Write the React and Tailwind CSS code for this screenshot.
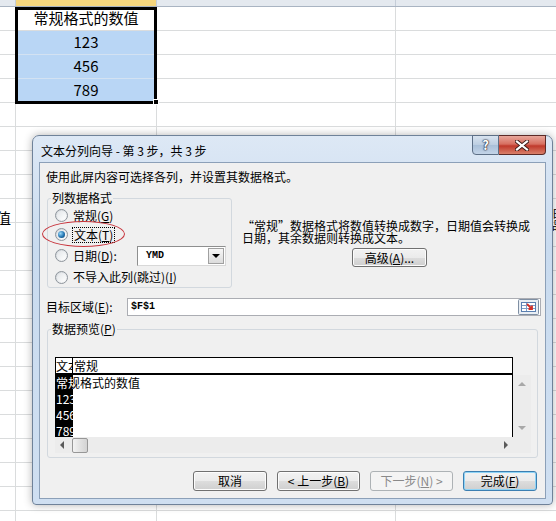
import React from 'react';

const rows = Array.from({ length: 22 }, (_, i) => i);

function Sheet() {
  return (
    <div className="flex flex-col">
      <div className="flex h-[7px] border-b border-[#a9b4c2]">
        <div className="w-[16px] border-r border-[#c5cdd8] bg-[#e4e9ef]" />
        <div className="w-[141px] border-r border-[#c5cdd8] bg-[#f4d57d]" />
        <div className="w-[239px] border-r border-[#c5cdd8] bg-[#e4e9ef]" />
        <div className="flex-1 bg-[#e4e9ef]" />
      </div>
      {rows.map((i) => (
        <div key={i} className="flex h-[24px] shrink-0">
          <div className="relative w-[16px] border-r border-b border-[#dadcdd]">
            {i === 8 && (
              <span className="absolute top-[11px] right-[4px] text-[15px] leading-[15px]">值</span>
            )}
          </div>
          <div
            className={
              i >= 1 && i <= 3
                ? 'flex w-[141px] items-center justify-center border-r border-b border-[#d3e2f2] bg-[#b9d6f5] text-[15px]'
                : 'flex w-[141px] items-center justify-center border-r border-b border-[#dadcdd] text-[15px]'
            }
          >
            {i === 0 && '常规格式的数值'}
            {i === 1 && '123'}
            {i === 2 && '456'}
            {i === 3 && '789'}
          </div>
          <div className="w-[239px] border-r border-b border-[#dadcdd]" />
          <div className="relative flex-1 border-b border-[#dadcdd]">
            {i === 8 && (
              <span className="absolute top-[8px] left-[156px] text-[11px] leading-[12px] whitespace-nowrap">
                日期
                <br />
                品名
              </span>
            )}
          </div>
        </div>
      ))}
    </div>
  );
}

function Radio({ checked }) {
  return (
    <span className="flex h-[13px] w-[13px] shrink-0 items-center justify-center rounded-full border border-[#8e959c] bg-[linear-gradient(135deg,#cfd4d9,#fbfbfb)]">
      <span className="flex h-[9px] w-[9px] items-center justify-center rounded-full bg-[linear-gradient(135deg,#e2e5e8,#ffffff)]">
        {checked && (
          <span className="h-[7px] w-[7px] rounded-full bg-[radial-gradient(circle_at_35%_35%,#9ad8f7,#2476b3_55%,#0c3557)]" />
        )}
      </span>
    </span>
  );
}

function U({ children }) {
  return <span className="underline underline-offset-[1px]">{children}</span>;
}

function CollapseIcon() {
  return (
    <svg width="21" height="16" viewBox="0 0 21 16">
      <rect x="0.5" y="0.5" width="20" height="15" rx="1" fill="#e9eef4" stroke="#7f8fa3" />
      <rect x="3.5" y="3.5" width="14" height="9" fill="#ffffff" stroke="#5a7fb0" />
      <line x1="4" y1="6.5" x2="17" y2="6.5" stroke="#7c9cc6" />
      <line x1="4" y1="9.5" x2="17" y2="9.5" stroke="#7c9cc6" />
      <line x1="8.5" y1="4" x2="8.5" y2="12" stroke="#7c9cc6" />
      <path d="M9 5 L14 10 M14 6.5 L14 10 L10.5 10" stroke="#d0302a" strokeWidth="1.8" fill="none" />
    </svg>
  );
}

function Dialog() {
  return (
    <div className="absolute top-[135px] left-[32px] flex h-[370px] w-[521px] flex-col rounded-t-[7px] rounded-b-[4px] border border-[#6f8299] bg-[linear-gradient(180deg,#dde8f5,#c9dbef_30%,#cfdff1)] shadow-[0_0_8px_rgba(0,0,0,0.3)]">
      <div className="relative flex h-[26px] items-center pt-[3px] pl-[8px] text-[12px] leading-[14px] text-black">
        文本分列向导 - 第 3 步，共 3 步
        <div className="absolute top-[-1px] right-[6px] flex">
          <div className="flex h-[20px] w-[27px] items-center justify-center rounded-bl-[4px] border border-[#5d6f86] bg-[linear-gradient(180deg,#d8e3ef,#bccde1_50%,#a9bfd8_51%,#c3d4e8)] text-[13px] font-bold text-white [text-shadow:0_0_1px_#223,0_0_1px_#223,0_0_2px_#223]">
            ?
          </div>
          <div className="flex h-[20px] w-[47px] items-center justify-center rounded-br-[4px] border border-l-0 border-[#5c2a26] bg-[linear-gradient(180deg,#e8a79b,#d76f60_45%,#c0392b_55%,#d9806a)]">
            <svg width="14" height="11" viewBox="0 0 14 11">
              <path d="M2 1.5 L12 9.5 M12 1.5 L2 9.5" stroke="#3b1a16" strokeWidth="4" strokeLinecap="square" />
              <path d="M2 1.5 L12 9.5 M12 1.5 L2 9.5" stroke="#ffffff" strokeWidth="2.2" strokeLinecap="square" />
            </svg>
          </div>
        </div>
      </div>
      <div className="ml-[6px] flex h-[337px] w-[507px] flex-col border border-[#8ca0b8] bg-[#f0f0f0] text-[12px] leading-[14px] text-black">
        <div className="mt-[7px] h-[14px] pl-[6px]">使用此屏内容可选择各列，并设置其数据格式。</div>

        <div className="mt-[7px] flex h-[97px]">
          <fieldset className="relative ml-[7px] h-[97px] w-[185px] rounded-[3px] border border-[#d2d8de]">
            <legend className="ml-[3px] px-[1px]">列数据格式</legend>
            <div className="flex flex-col pt-[1px] pl-[7px]">
              <div className="flex h-[19px] items-center gap-[5px]">
                <Radio />
                <span>常规(<U>G</U>)</span>
              </div>
              <div className="flex h-[19px] items-center gap-[4px]">
                <Radio checked />
                <span className="border border-dotted border-black px-[1px] leading-[14px]">
                  文本(<U>T</U>)
                </span>
              </div>
              <div className="flex h-[23px] items-center gap-[5px]">
                <Radio />
                <span className="w-[59px]">日期(<U>D</U>):</span>
                <div className="flex h-[20px] w-[89px] items-center border border-[#8e8f8f] border-r-[#d8d8d8] border-b-[#d8d8d8] bg-white">
                  <span className="flex-1 pl-[8px] font-['Liberation_Mono',monospace] text-[10px] font-bold">YMD</span>
                  <span className="mr-[1px] flex h-[16px] w-[16px] items-center justify-center border border-[#a0a0a0] bg-[linear-gradient(180deg,#f7f7f7,#dcdcdc)]">
                    <span className="h-0 w-0 border-x-[4px] border-t-[4px] border-x-transparent border-t-black" />
                  </span>
                </div>
              </div>
              <div className="flex h-[20px] items-center gap-[5px]">
                <Radio />
                <span>不导入此列(跳过)(<U>I</U>)</span>
              </div>
            </div>
            <div className="absolute top-[16px] left-[-6px] h-[26px] w-[83px] rounded-[50%] border border-[#c7353d]" />
          </fieldset>
          <div className="mt-[29px] ml-[10px] flex flex-col">
            <div className="leading-[12px] whitespace-nowrap">
              “常规”数据格式将数值转换成数字，日期值会转换成
              <br />
              日期，其余数据则转换成文本。
            </div>
            <button className="mt-[4px] ml-[110px] flex h-[19px] w-[75px] items-center justify-center rounded-[3px] border border-[#707070] bg-[linear-gradient(180deg,#f2f2f2,#ebebeb_50%,#dddddd_51%,#cfcfcf)] shadow-[inset_0_0_0_1px_#fcfcfc]">
              高级(<U>A</U>)...
            </button>
          </div>
        </div>

        <div className="mt-[10px] flex h-[18px] items-center pl-[6px]">
          <span className="w-[81px]">目标区域(<U>E</U>):</span>
          <div className="flex h-[18px] w-[414px] items-center border border-[#abadb3] bg-white">
            <span className="flex-1 pl-[3px] font-['Liberation_Mono',monospace] text-[10px] font-bold">$F$1</span>
            <span className="mr-[1px] flex">
              <CollapseIcon />
            </span>
          </div>
        </div>

        <fieldset className="mt-[6px] ml-[7px] h-[136px] w-[491px] rounded-[3px] border border-[#d2d8de]">
          <legend className="ml-[3px] px-[1px]">数据预览(<U>P</U>)</legend>
          <div className="mt-[21px] ml-[7px] flex h-[96px] w-[476px]">
            <div className="flex w-[458px] flex-col">
              <div className="flex h-[18px] border border-b-2 border-black bg-white leading-[15px] whitespace-nowrap">
                <div className="w-[17px] overflow-hidden border-r border-black">文本</div>
                <div className="pl-[1px]">常规</div>
              </div>
              <div className="relative h-[62px] overflow-hidden border-x border-black bg-white leading-[16px] whitespace-nowrap">
                <div>常规格式的数值</div>
                <div className="absolute top-0 left-0 h-full w-[17px] overflow-hidden bg-black text-white">
                  <div>常规格式的数值</div>
                  <div>123</div>
                  <div>456</div>
                  <div>789</div>
                </div>
              </div>
              <div className="flex h-[16px] items-center bg-[#ececec]">
                <span className="ml-[5px] h-0 w-0 border-y-[4px] border-r-[4px] border-y-transparent border-r-[#5a5a5a]" />
                <span className="ml-[8px] h-[15px] w-[16px] rounded-[2px] border border-[#979797] bg-[linear-gradient(90deg,#f3f3f3,#e2e2e2_50%,#d3d3d3)]" />
                <span className="mr-[5px] ml-auto h-0 w-0 border-y-[4px] border-l-[4px] border-y-transparent border-l-[#5a5a5a]" />
              </div>
            </div>
            <div className="flex w-[18px] flex-col">
              <div className="h-[18px]" />
              <div className="flex h-[62px] flex-col items-center justify-between bg-[#ececec] py-[7px]">
                <span className="h-0 w-0 border-x-[4px] border-b-[4px] border-x-transparent border-b-[#a8a8a8]" />
                <span className="h-0 w-0 border-x-[4px] border-t-[4px] border-x-transparent border-t-[#a8a8a8]" />
              </div>
              <div className="h-[16px] bg-[#ececec]" />
            </div>
          </div>
        </fieldset>

        <div className="mt-[13px] flex h-[20px] justify-end gap-[10px] pr-[8px]">
          <button className="flex w-[74px] items-center justify-center rounded-[3px] border border-[#707070] bg-[linear-gradient(180deg,#f2f2f2,#ebebeb_50%,#dddddd_51%,#cfcfcf)] shadow-[inset_0_0_0_1px_#fcfcfc]">
            取消
          </button>
          <button className="flex w-[83px] items-center justify-center rounded-[3px] border border-[#707070] bg-[linear-gradient(180deg,#f2f2f2,#ebebeb_50%,#dddddd_51%,#cfcfcf)] shadow-[inset_0_0_0_1px_#fcfcfc]">
            &lt; 上一步(<U>B</U>)
          </button>
          <button className="flex w-[83px] items-center justify-center rounded-[3px] border border-[#adb2b5] bg-[#f4f4f4] text-[#8a8a8a]">
            下一步(<U>N</U>) &gt;
          </button>
          <button className="flex w-[74px] items-center justify-center rounded-[3px] border border-[#3c7fb1] bg-[linear-gradient(180deg,#f2f2f2,#ebebeb_50%,#dddddd_51%,#cfcfcf)] shadow-[inset_0_0_0_1px_#8fd4f6]">
            完成(<U>F</U>)
          </button>
        </div>
      </div>
    </div>
  );
}

export default function App() {
  return (
    <div className="relative h-[521px] w-[556px] overflow-hidden bg-white font-['Noto_Sans_CJK_SC','Noto_Sans',sans-serif] text-black">
      <Sheet />
      <div className="absolute top-[7px] left-[15px] h-[97px] w-[142px] border-[3px] border-black" />
      <div className="absolute top-[99px] left-[153px] h-[6px] w-[6px] border border-white bg-black" />
      <Dialog />
    </div>
  );
}
